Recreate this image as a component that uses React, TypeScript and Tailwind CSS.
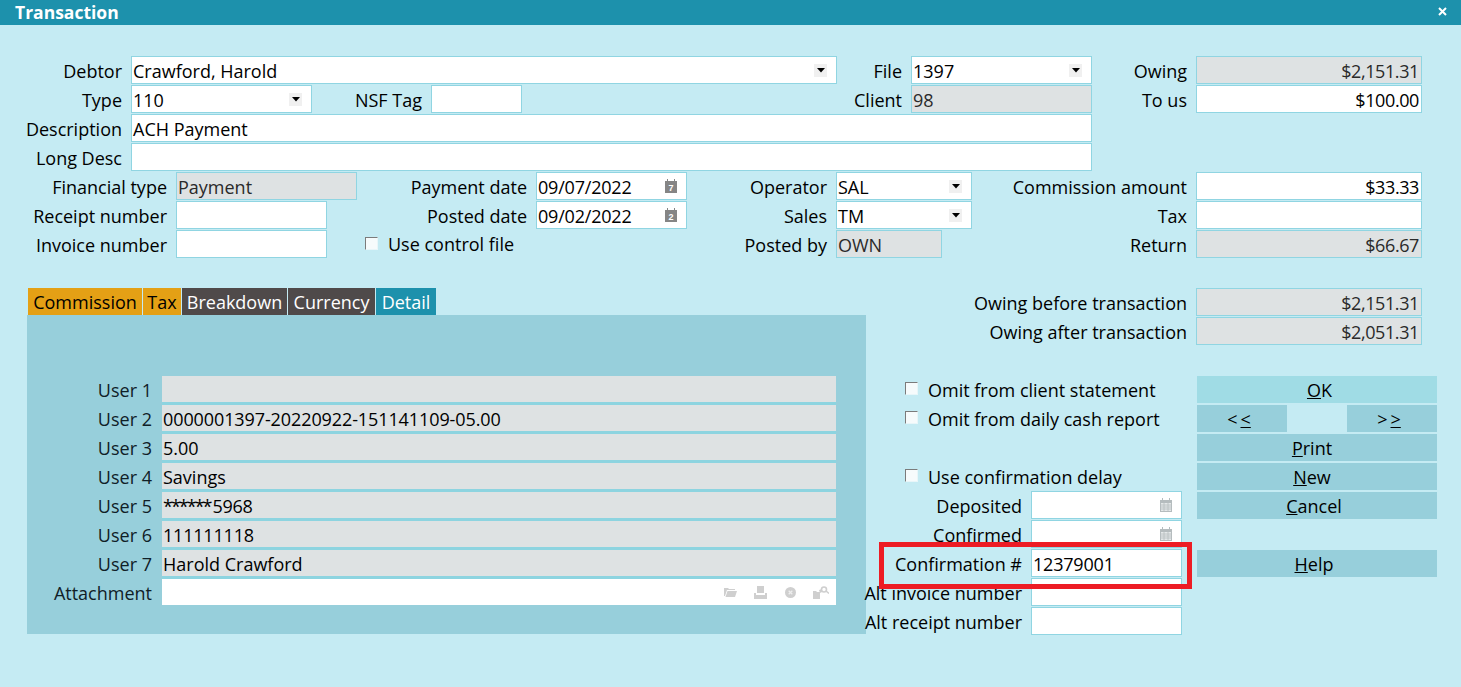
import React from "react";

const Arrow = () => (
  <span className="ml-auto mr-[9px] -mt-[2px] flex h-[13px] w-[13px] shrink-0 items-center justify-center bg-[#f0f0f0]">
    <svg width="8" height="5" viewBox="0 0 8 5"><path d="M0 0h8L4 4.5z" fill="#000" /></svg>
  </span>
);

const DayIcon = ({ n }: { n: string }) => (
  <svg width="12" height="14" viewBox="0 0 12 14" className="ml-auto mr-[9px] -mt-[2px] shrink-0">
    <path d="M0 2h2V0h1v2h6V0h1v2h2v12H0z" fill="#858585" />
    <text x="6" y="12" textAnchor="middle" fontSize="9" fontWeight="700" fill="#fff" fontFamily="'Liberation Sans', sans-serif">{n}</text>
  </svg>
);

const GridIcon = () => (
  <svg width="12" height="14" viewBox="0 0 12 14" className="ml-auto mr-[9px] -mt-[2px] shrink-0">
    <path d="M0 2h2V0h1v2h6V0h1v2h2v12H0z" fill="#b5bcbe" />
    <path d="M1 5h10v8H1z" fill="#e4e8e9" />
    <path d="M1 7h10M1 9h10M1 11h10M4 5v8M8 5v8" stroke="#b5bcbe" strokeWidth="0.8" />
  </svg>
);

const Check = () => (
  <span className="-mt-[2px] h-[13px] w-[13px] shrink-0 border border-[#7b7b7b] border-r-[#e8f6f9] border-b-[#e8f6f9] bg-[#f6fbfc]" />
);

const Lbl = ({ className, children }: { className: string; children?: React.ReactNode }) => (
  <div className={`mr-[9px] flex shrink-0 items-center justify-end whitespace-nowrap pt-[2px] text-black ${className}`}>{children}</div>
);

const Field = ({ className, children }: { className: string; children?: React.ReactNode }) => (
  <div className={`flex h-[28px] shrink-0 items-center whitespace-nowrap border border-[#90d5e2] bg-white pl-px pt-[2px] text-black ${className}`}>{children}</div>
);

const Off = ({ className, children }: { className: string; children?: React.ReactNode }) => (
  <div className={`flex h-[28px] shrink-0 items-center whitespace-nowrap border border-[#90d5e2] bg-[#dee2e3] pl-px pt-[2px] text-[#2a2a2a] ${className}`}>{children}</div>
);

const Row = ({ children }: { children: React.ReactNode }) => <div className="mb-px flex h-[28px]">{children}</div>;

const Tab = ({ className, children }: { className: string; children: React.ReactNode }) => (
  <div className={`flex h-[27px] shrink-0 items-center justify-center whitespace-nowrap ${className}`}>{children}</div>
);

const users: [string, React.ReactNode][] = [
  ["User 1", ""],
  ["User 2", <span className="tracking-[-0.1px]">0000001397-20220922-151141109-05.00</span>],
  ["User 3", "5.00"],
  ["User 4", "Savings"],
  ["User 5", <><span className="tracking-[-2px]">******</span><span className="ml-[2px] tracking-[-0.3px]">5968</span></>],
  ["User 6", <span className="tracking-[-0.2px]">111111118</span>],
  ["User 7", "Harold Crawford"],
];

const Btn = ({ className, children }: { className: string; children: React.ReactNode }) => (
  <div className={`flex h-[27px] items-center justify-center bg-[#97cfdb] text-black ${className}`}>{children}</div>
);

export default function App() {
  return (
    <div className="relative h-[687px] w-[1461px] overflow-hidden bg-[#c5ebf3] font-['Open_Sans',sans-serif] text-[18px] leading-none">
      <div className="flex h-[25px] items-center bg-[#1d91ac] pl-[15px] pr-[14px] text-[17.5px] font-bold text-white">
        <span>Transaction</span>
        <svg width="9" height="9" viewBox="0 0 9 9" className="ml-auto -mt-[3px]">
          <path d="M1 1l7 7M8 1L1 8" stroke="#fff" strokeWidth="2" />
        </svg>
      </div>

      <div className="pt-[31px]">
        <Row>
          <Lbl className="w-[122px]">Debtor</Lbl>
          <Field className="w-[706px]">Crawford, Harold<Arrow /></Field>
          <Lbl className="w-[65px]">File</Lbl>
          <Field className="w-[181px]">1397<Arrow /></Field>
          <Lbl className="w-[95px]">Owing</Lbl>
          <Off className="w-[226px] justify-end pr-[2px] tracking-[-0.4px]">$2,151.31</Off>
        </Row>
        <Row>
          <Lbl className="w-[122px]">Type</Lbl>
          <Field className="w-[181px]">110<Arrow /></Field>
          <Lbl className="w-[110px]">NSF Tag</Lbl>
          <Field className="w-[91px]" />
          <Lbl className="w-[380px]">Client</Lbl>
          <Off className="w-[181px]">98</Off>
          <Lbl className="w-[95px]">To us</Lbl>
          <Field className="w-[226px] justify-end pr-[2px] tracking-[-0.4px]">$100.00</Field>
        </Row>
        <Row>
          <Lbl className="w-[122px]">Description</Lbl>
          <Field className="w-[961px]">ACH Payment</Field>
        </Row>
        <Row>
          <Lbl className="w-[122px]">Long Desc</Lbl>
          <Field className="w-[961px]" />
        </Row>
        <Row>
          <Lbl className="w-[167px]">Financial type</Lbl>
          <Off className="w-[181px]">Payment</Off>
          <Lbl className="w-[170px]">Payment date</Lbl>
          <Field className="w-[151px] tracking-[-0.2px]">09/07/2022<DayIcon n="7" /></Field>
          <Lbl className="w-[140px]">Operator</Lbl>
          <Field className="w-[136px]">SAL<Arrow /></Field>
          <Lbl className="w-[215px]">Commission amount</Lbl>
          <Field className="w-[226px] justify-end pr-[2px] tracking-[-0.4px]">$33.33</Field>
        </Row>
        <Row>
          <Lbl className="w-[167px]">Receipt number</Lbl>
          <Field className="w-[151px]" />
          <Lbl className="w-[200px]">Posted date</Lbl>
          <Field className="w-[151px] tracking-[-0.2px]">09/02/2022<DayIcon n="2" /></Field>
          <Lbl className="w-[140px]">Sales</Lbl>
          <Field className="w-[136px]">TM<Arrow /></Field>
          <Lbl className="w-[215px]">Tax</Lbl>
          <Field className="w-[226px]" />
        </Row>
        <Row>
          <Lbl className="w-[167px]">Invoice number</Lbl>
          <Field className="w-[151px]" />
          <div className="mr-[9px] flex w-[500px] items-center whitespace-nowrap text-black">
            <span className="ml-[38px] flex items-center gap-[10px]"><Check /><span>Use control file</span></span>
            <span className="ml-auto pt-[2px]">Posted by</span>
          </div>
          <Off className="w-[106px]">OWN</Off>
          <Lbl className="w-[245px]">Return</Lbl>
          <Off className="w-[226px] justify-end pr-[2px] tracking-[-0.4px]">$66.67</Off>
        </Row>
      </div>

      <div className="mt-[30px] flex">
        <div className="ml-[27px] w-[839px] shrink-0">
          <div className="flex gap-px pl-px">
            <Tab className="w-[114px] bg-[#e4a015] text-black">Commission</Tab>
            <Tab className="w-[38px] bg-[#e4a015] text-black">Tax</Tab>
            <Tab className="w-[105px] bg-[#4f4a4a] text-white">Breakdown</Tab>
            <Tab className="w-[87px] bg-[#4f4a4a] text-white">Currency</Tab>
            <Tab className="w-[60px] bg-[#1d91ac] text-white">Detail</Tab>
          </div>
          <div className="h-[319px] bg-[#97cfdb] pt-[61px]">
            {users.map(([l, v]) => (
              <div key={l} className="flex h-[29px]">
                <div className="flex h-[26px] w-[125px] shrink-0 items-center justify-end pt-[2px] text-[#102027]">{l}</div>
                <div className="ml-[10px] h-[29px] w-[674px] border-b-[3px] border-[#8dd4e0] bg-[#dee2e3] pl-px text-black">
                  <div className="flex h-[26px] items-center pt-[2px]">{v}</div>
                </div>
              </div>
            ))}
            <div className="flex h-[26px]">
              <div className="flex w-[125px] shrink-0 items-center justify-end pt-[2px] text-[#102027]">Attachment</div>
              <div className="ml-[10px] flex w-[674px] items-center justify-end bg-white pr-[7px]">
                <svg width="13" height="10" viewBox="0 0 13 10" className="mr-[17px]"><path d="M0 1h4l1 1h6v1H3L1 9H0zM3.5 4H13l-2 6H1.5z" fill="#cfcfcf" /></svg>
                <svg width="13" height="13" viewBox="0 0 13 13" className="mr-[18px]"><path d="M3 0h7v7H3zM0 7h2v2h9V7h2v6H0z" fill="#cfcfcf" /></svg>
                <svg width="11" height="11" viewBox="0 0 11 11" className="mr-[17px]"><circle cx="5.5" cy="5.5" r="5.5" fill="#cfcfcf" /><path d="M3.7 3.7l3.6 3.6M7.3 3.7L3.7 7.3" stroke="#eee" strokeWidth="1.3" /></svg>
                <svg width="16" height="13" viewBox="0 0 16 13"><path d="M0 5h3l1 1h3v7H0z" fill="#cfcfcf" /><path d="M6 4l3-1v3l-2 1z" fill="#cfcfcf" /><circle cx="11" cy="3.5" r="2.5" fill="none" stroke="#cfcfcf" strokeWidth="1.6" /><path d="M13 5l3 2.5" stroke="#cfcfcf" strokeWidth="1.6" /></svg>
              </div>
            </div>
          </div>
        </div>

        <div className="w-[595px] shrink-0">
          <div className="ml-[107px]">
            <Row>
              <Lbl className="w-[214px]">Owing before transaction</Lbl>
              <Off className="w-[226px] justify-end pr-[2px] tracking-[-0.4px]">$2,151.31</Off>
            </Row>
            <Row>
              <Lbl className="w-[214px]">Owing after transaction</Lbl>
              <Off className="w-[226px] justify-end pr-[2px] tracking-[-0.4px]">$2,051.31</Off>
            </Row>
          </div>
          <div className="mt-[30px] flex">
            <div className="w-[316px] shrink-0">
              <div className="flex h-[29px] items-center gap-[10px] whitespace-nowrap pl-[39px] text-black"><Check />Omit from client statement</div>
              <div className="flex h-[29px] items-center gap-[10px] whitespace-nowrap pl-[39px] text-black"><Check />Omit from daily cash report</div>
              <div className="h-[29px]" />
              <div className="flex h-[29px] items-center gap-[10px] whitespace-nowrap pl-[39px] text-black"><Check />Use confirmation delay</div>
              <Row><Lbl className="w-[156px]">Deposited</Lbl><Field className="w-[151px]"><GridIcon /></Field></Row>
              <Row><Lbl className="w-[156px]">Confirmed</Lbl><Field className="w-[151px]"><GridIcon /></Field></Row>
              <Row><Lbl className="w-[156px]">Confirmation #</Lbl><Field className="w-[151px] tracking-[-0.2px]">12379001</Field></Row>
              <Row><Lbl className="w-[156px]">Alt invoice number</Lbl><Field className="w-[151px]" /></Row>
              <Row><Lbl className="w-[156px]">Alt receipt number</Lbl><Field className="w-[151px]" /></Row>
            </div>
            <div className="ml-[15px] flex w-[240px] shrink-0 flex-col gap-[2px] pt-px">
              <Btn className="bg-[#a0dce5] pl-[5px]"><u>O</u><span>K</span></Btn>
              <div className="flex justify-between">
                <Btn className="w-[90px] pr-[6px]"><span className="tracking-[3px]">&lt;</span><u>&lt;</u></Btn>
                <Btn className="w-[90px] pr-[6px]"><span className="tracking-[3px]">&gt;</span><u>&gt;</u></Btn>
              </div>
              <Btn className="pr-[10px]"><u>P</u>rint</Btn>
              <Btn className="pr-[10px]"><u>N</u>ew</Btn>
              <Btn className="pr-[6px]"><u>C</u>ancel</Btn>
              <Btn className="mt-[29px] pr-[6px]"><u>H</u>elp</Btn>
            </div>
          </div>
        </div>
      </div>

      <div className="pointer-events-none absolute left-[879px] top-[542px] h-[47px] w-[313px] border-[5px] border-[#ed1c24]" />
    </div>
  );
}
